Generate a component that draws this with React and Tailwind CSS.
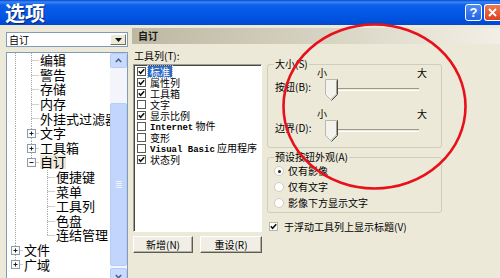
import React from "react";

const ROW_H = 14.6;

function TreeCell({ type }) {
  const h = ROW_H;
  const c = 8.5;
  const m = 7.5;
  const hasFull = type === "V" || type.startsWith("T");
  const hasHalf = type.startsWith("L");
  const hasHoriz = type.startsWith("T") || type.startsWith("L");
  const box = type.endsWith("+") ? "+" : type.endsWith("-") ? "-" : null;
  const stroke = "#a3a3a3";
  return (
    <svg width="16" height={h} className="block shrink-0">
      {hasFull && <line x1={c} y1={0} x2={c} y2={h} stroke={stroke} strokeDasharray="1 1" />}
      {hasHalf && <line x1={c} y1={0} x2={c} y2={m} stroke={stroke} strokeDasharray="1 1" />}
      {hasHoriz && <line x1={c} y1={m} x2={16} y2={m} stroke={stroke} strokeDasharray="1 1" />}
      {box && (
        <g>
          <rect x={c - 4} y={m - 4} width={8} height={8} fill="#fbfbf8" stroke="#8c9cb0" />
          <line x1={c - 2} y1={m} x2={c + 2} y2={m} stroke="#1f1f1f" />
          {box === "+" && <line x1={c} y1={m - 2} x2={c} y2={m + 2} stroke="#1f1f1f" />}
        </g>
      )}
    </svg>
  );
}

const treeRows = [
  { t: "编辑", cells: ["V", "T"] },
  { t: "警告", cells: ["V", "T"] },
  { t: "存储", cells: ["V", "T"] },
  { t: "内存", cells: ["V", "T"] },
  { t: "外挂式过滤器", cells: ["V", "T"] },
  { t: "文字", cells: ["V", "T+"] },
  { t: "工具箱", cells: ["V", "T+"] },
  { t: "自订", cells: ["V", "L-"], sel: true },
  { t: "便捷键", cells: ["V", "", "T"] },
  { t: "菜单", cells: ["V", "", "T"] },
  { t: "工具列", cells: ["V", "", "T"] },
  { t: "色盘", cells: ["V", "", "T"] },
  { t: "连结管理", cells: ["V", "", "L"] },
  { t: "文件", cells: ["T+"] },
  { t: "广域", cells: ["L+"] },
];

function Check({ checked, className }) {
  return (
    <span className={"flex items-center justify-center w-[9px] h-[9px] bg-white shrink-0 " + className}>
      {checked && (
        <svg width="7" height="7" viewBox="0 0 7 7" className="block">
          <path d="M0.8 3.2 L2.6 5.2 L6.2 1.2" fill="none" stroke="#111" strokeWidth="1.6" />
        </svg>
      )}
    </span>
  );
}

const listItems = [
  { t: "标准", c: true, sel: true },
  { t: "属性列", c: true },
  { t: "工具箱", c: true },
  { t: "文字", c: false },
  { t: "显示比例", c: true },
  { mono: "Internet", t: " 物件", c: false },
  { t: "变形", c: false },
  { mono: "Visual Basic", t: " 应用程序", c: false },
  { t: "状态列", c: true },
];

function Thumb() {
  return (
    <svg width="13" height="22" viewBox="0 0 13 22" className="block">
      <polygon points="0.5,0.5 12.5,0.5 12.5,15.5 6.5,21.5 0.5,15.5" fill="#f3f2ec" />
      <polyline points="6.5,21.5 0.5,15.5 0.5,0.5 12.5,0.5" fill="none" stroke="#b9b7aa" />
      <polyline points="12.5,0.5 12.5,15.5 6.5,21.5" fill="none" stroke="#4a4a44" />
      <polyline points="11.5,1.5 11.5,15 6.5,20" fill="none" stroke="#a5a397" />
    </svg>
  );
}

function SliderBlock({ label, first }) {
  return (
    <div className={first ? "" : "mt-[8px]"}>
      <div className="h-[11px] pl-[49px]">
        <div className="w-[110px] flex justify-between text-[10px] leading-[10px]">
          <span>小</span>
          <span>大</span>
        </div>
      </div>
      <div className="flex h-[22px]">
        <div className="w-[57px] pl-[7px] pt-[3px] text-[10px] leading-[10px] whitespace-nowrap">{label}</div>
        <div className="relative w-[94px] h-[22px]">
          <div className="absolute left-[6px] right-0 top-[9px] h-[3px] border-t border-t-[#9d9a8a] border-b border-b-white" />
          <div className="absolute left-0 top-0">
            <Thumb />
          </div>
        </div>
      </div>
    </div>
  );
}

function Radio({ on, label }) {
  return (
    <div className="flex items-center h-[16px] pl-[6px] gap-[4px]">
      <span className="w-[10px] h-[10px] rounded-full border border-[#cfcdc0] bg-white flex items-center justify-center">
        {on && <span className="w-[3px] h-[3px] rounded-full bg-[#222]" />}
      </span>
      <span className="text-[10px] leading-[10px] whitespace-nowrap">{label}</span>
    </div>
  );
}

export default function App() {
  return (
    <div className="relative w-[500px] h-[278px] overflow-hidden bg-[#ece9d8] text-black font-['Noto_Sans_CJK_SC','Noto_Sans',sans-serif]">
      {/* Title bar */}
      <div className="h-[25px] flex items-center pl-[5px] bg-[linear-gradient(to_bottom,#0846cf_0px,#3a88f6_2px,#0b5fe9_5px,#0055e2_17px,#0049cf_25px)]">
        <span className="pt-[1px] text-[20px] leading-[20px] font-bold text-white [text-shadow:1px_1px_0_#0a2677]">选项</span>
        <div className="ml-auto flex items-center gap-[2px]">
          <div className="w-[17px] h-[17px] rounded-[3px] border border-white bg-[linear-gradient(to_bottom,#4c8cf6,#2563e3)] flex items-center justify-center text-white text-[13px] leading-[13px] font-bold font-['Liberation_Sans',sans-serif]">
            ?
          </div>
          <div className="w-[16px] h-[17px] rounded-l-[3px] border border-r-0 border-white bg-[linear-gradient(to_bottom,#ec7a55,#d9431c)] flex items-center justify-center">
            <svg width="9" height="9" viewBox="0 0 9 9" className="block">
              <path d="M1 1 L8 8 M8 1 L1 8" stroke="white" strokeWidth="1.8" />
            </svg>
          </div>
        </div>
      </div>

      <div className="flex">
        {/* Left column */}
        <div className="ml-[6px] w-[122px] pt-[7px] flex flex-col shrink-0">
          <div className="h-[15px] border border-[#7f9db9] bg-white flex items-center">
            <span className="pl-[2px] text-[10px] leading-[10px]">自订</span>
            <div className="ml-auto mr-[1px] w-[16px] h-[11px] bg-[#ece9d8] border border-t-white border-l-white border-r-[#716f64] border-b-[#716f64] flex items-center justify-center">
              <svg width="7" height="4" viewBox="0 0 7 4" className="block">
                <polygon points="0,0 7,0 3.5,4" fill="#111" />
              </svg>
            </div>
          </div>
          <div className="mt-[5px] h-[240px] border border-[#7f9db9] bg-white flex">
            <div className="flex-1 min-w-0 overflow-hidden">
              {treeRows.map((r, i) => (
                <div key={i} className="flex items-center h-[14.6px]">
                  {r.cells.map((c, j) => (
                    <TreeCell key={j} type={c} />
                  ))}
                  <span
                    className={
                      "ml-[1px] px-[0px] text-[13px] leading-[14px] whitespace-nowrap " +
                      (r.sel ? "bg-[#ece9d8]" : "")
                    }
                  >
                    {r.t}
                  </span>
                </div>
              ))}
            </div>
            <div className="w-[17px] shrink-0 flex flex-col bg-[#f3f5fb]">
              <div className="h-[15px] m-[0px] rounded-[2px] border border-[#b6cbf6] bg-[#c8daff] flex items-center justify-center">
                <svg width="7" height="5" viewBox="0 0 7 5" className="block">
                  <path d="M0.8 4 L3.5 1.2 L6.2 4" fill="none" stroke="#4d6185" strokeWidth="1.5" />
                </svg>
              </div>
              <div className="h-[35px]" />
              <div className="h-[163px] rounded-[2px] border border-[#b6cbf6] bg-[#c2d5fc] flex items-center justify-center">
                <div className="flex flex-col gap-[1px]">
                  <span className="w-[6px] h-[1px] bg-[#eef4fe]" />
                  <span className="w-[6px] h-[1px] bg-[#eef4fe]" />
                  <span className="w-[6px] h-[1px] bg-[#eef4fe]" />
                  <span className="w-[6px] h-[1px] bg-[#eef4fe]" />
                </div>
              </div>
              <div className="h-[2px]" />
              <div className="h-[17px] rounded-[2px] border border-[#b6cbf6] bg-[#c8daff] flex items-center justify-center">
                <svg width="7" height="5" viewBox="0 0 7 5" className="block">
                  <path d="M0.8 1 L3.5 3.8 L6.2 1" fill="none" stroke="#4d6185" strokeWidth="1.5" />
                </svg>
              </div>
            </div>
          </div>
        </div>

        {/* Right side */}
        <div className="ml-[4px] flex-1 pt-[3px]">
          <div className="h-[16px] flex items-center pl-[6px] bg-[linear-gradient(to_right,#bdb8a3,#d6d2c1_50%,#f2f0e6)]">
            <span className="text-[10px] leading-[10px] font-bold text-[#1a1a1a]">自订</span>
          </div>
          <div className="flex">
            {/* list column */}
            <div className="ml-[1px] w-[129px] shrink-0">
              <div className="mt-[6px] pl-[1px] text-[10px] leading-[12px]">工具列(T):</div>
              <div className="mt-[2px] h-[168px] bg-white border border-t-[#a09e92] border-l-[#a09e92] border-r-white border-b-white shadow-[inset_1px_1px_0_#4a4a44]">
                <div className="pt-[1px] pl-[3px]">
                  {listItems.map((it, i) => (
                    <div key={i} className="flex items-center h-[11px]">
                      <Check checked={it.c} className="border border-[#5a5a55]" />
                      <span
                        className={
                          "ml-[2px] px-[2px] text-[10px] leading-[11px] whitespace-nowrap " +
                          (it.sel ? "bg-[#316ac5] text-white outline outline-1 outline-dotted outline-[#9db4e0]" : "")
                        }
                      >
                        {it.mono && (
                          <span className="font-['Liberation_Mono',monospace] font-bold text-[9px]">{it.mono}</span>
                        )}
                        {it.t}
                      </span>
                    </div>
                  ))}
                </div>
              </div>
              <div className="mt-[4px] flex gap-[7px]">
                <div className="w-[60px] h-[17px] bg-[#f1efe5] border border-t-white border-l-white border-r-[#5c5b55] border-b-[#5c5b55] shadow-[inset_-1px_-1px_0_#b3b0a2] flex items-center justify-center text-[10px] leading-[10px]">
                  新增(N)
                </div>
                <div className="w-[62px] h-[17px] bg-[#f1efe5] border border-t-white border-l-white border-r-[#5c5b55] border-b-[#5c5b55] shadow-[inset_-1px_-1px_0_#b3b0a2] flex items-center justify-center text-[10px] leading-[10px]">
                  重设(R)
                </div>
              </div>
            </div>

            {/* options column */}
            <div className="ml-[5px] w-[175px] shrink-0">
              <fieldset className="mt-[16px] border border-[#d0cdbd] rounded-[3px] pb-[5px]">
                <legend className="ml-[6px] px-[1px] text-[10px] leading-[8px]">大小(S)</legend>
                <SliderBlock label="按钮(B):" first />
                <SliderBlock label="边界(D):" />
              </fieldset>
              <fieldset className="mt-[5px] border border-[#d0cdbd] rounded-[3px] pt-[2px] pb-[1px]">
                <legend className="ml-[6px] px-[1px] text-[10px] leading-[8px]">预设按钮外观(A)</legend>
                <Radio on label="仅有影像" />
                <Radio label="仅有文字" />
                <Radio label="影像下方显示文字" />
              </fieldset>
              <div className="mt-[9px] ml-[2px] h-[9px] flex items-center gap-[6px]">
                <Check checked className="border border-[#b9b7aa]" />
                <span className="text-[10px] leading-[10px] whitespace-nowrap">于浮动工具列上显示标题(V)</span>
              </div>
            </div>
          </div>
        </div>
      </div>

      {/* red annotation circle */}
      <svg className="absolute left-0 top-0 pointer-events-none" width="500" height="278" viewBox="0 0 500 278">
        <ellipse cx="374.5" cy="106.5" rx="91" ry="82" fill="none" stroke="#e8101a" strokeWidth="2.6" />
      </svg>
    </div>
  );
}
